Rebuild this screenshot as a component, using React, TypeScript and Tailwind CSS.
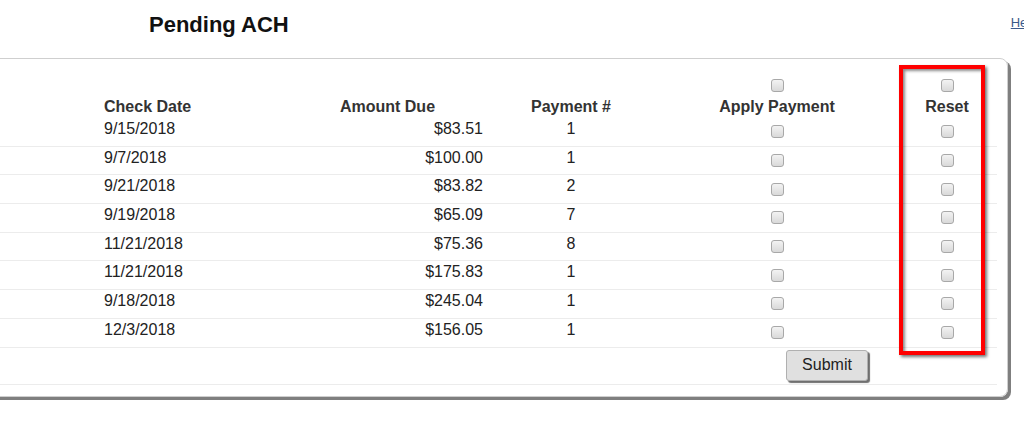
import React from 'react'

// Pending ACH grid: checks waiting to be applied, with an annotated Reset column.
type Row = { date: string; amount: string; num: number }

const rows: Row[] = [
  { date: '9/15/2018', amount: '$83.51', num: 1 },
  { date: '9/7/2018', amount: '$100.00', num: 1 },
  { date: '9/21/2018', amount: '$83.82', num: 2 },
  { date: '9/19/2018', amount: '$65.09', num: 7 },
  { date: '11/21/2018', amount: '$75.36', num: 8 },
  { date: '11/21/2018', amount: '$175.83', num: 1 },
  { date: '9/18/2018', amount: '$245.04', num: 1 },
  { date: '12/3/2018', amount: '$156.05', num: 1 },
]

const cols = 'grid grid-cols-[123px_186px_195px_172px_240px_100px]'

function Box() {
  return (
    <input
      type="checkbox"
      className="m-0 block h-[13px] w-[13px] appearance-none rounded-[3px] border border-[#a8a8a8] bg-linear-to-b from-[#f3f3f3] to-[#d9d9d9]"
    />
  )
}

export default function App() {
  return (
    <div
      className="relative h-[421px] w-[1024px] overflow-hidden bg-white text-[16px] text-[#222]"
      style={{ fontFamily: '"Liberation Sans", Arial, sans-serif' }}
    >
      <div className="flex h-[58px] items-start">
        <h1 className="ml-[149px] mt-[12px] whitespace-nowrap text-[22px] font-bold leading-[26px] text-[#111]">
          Pending ACH
        </h1>
        <a href="#" className="ml-[722px] mt-[13px] whitespace-nowrap text-[13px] text-[#3b5a8a] underline">
          Help
        </a>
      </div>

      <div className="ml-[-20px] w-[1028px] rounded-[8px] border border-[#cfcfcf] pb-[11px] shadow-[3px_3px_0_#7f7f7f]">
        <div className="w-[1016px]">
          <div className={`${cols} h-[59px] items-end font-bold leading-[18px] text-[#333]`}>
            <div />
            <div className="pb-[2px]">Check Date</div>
            <div className="pb-[2px] text-center">Amount Due</div>
            <div className="pb-[2px] text-center">Payment #</div>
            <div className="flex flex-col items-center pb-[2px]">
              <div className="mb-[6px]"><Box /></div>
              <div>Apply Payment</div>
            </div>
            <div className="flex flex-col items-center pb-[2px]">
              <div className="mb-[6px]"><Box /></div>
              <div>Reset</div>
            </div>
          </div>

          {rows.map((r, i) => (
            <div key={i} className={`${cols} h-[28.7px] border-b border-[#ececec] leading-[18px]`}>
              <div />
              <div className="pt-[2px]">{r.date}</div>
              <div className="pr-[2px] pt-[2px] text-right">{r.amount}</div>
              <div className="pt-[2px] text-center">{r.num}</div>
              <div className="flex items-center justify-center"><Box /></div>
              <div className="flex items-center justify-center"><Box /></div>
            </div>
          ))}

          <div className={`${cols} h-[37px] border-b border-[#ececec]`}>
            <div />
            <div />
            <div />
            <div />
            <div className="flex justify-end pr-[29px] pt-[2px]">
              <button className="h-[31px] w-[82px] rounded-[3px] border border-[#b0b0b0] bg-[#e0e0e0] text-[16px] text-[#222] shadow-[2px_2px_1px_#6f6f6f]">
                Submit
              </button>
            </div>
            <div />
          </div>
        </div>
      </div>

      {/* annotation frame drawn over the Reset column */}
      <div className="absolute left-[899px] top-[65px] h-[290px] w-[86px] border-4 border-[#ff0000] shadow-[2px_2px_3px_rgba(0,0,0,0.55),inset_2px_2px_3px_rgba(0,0,0,0.45)]" />
    </div>
  )
}
